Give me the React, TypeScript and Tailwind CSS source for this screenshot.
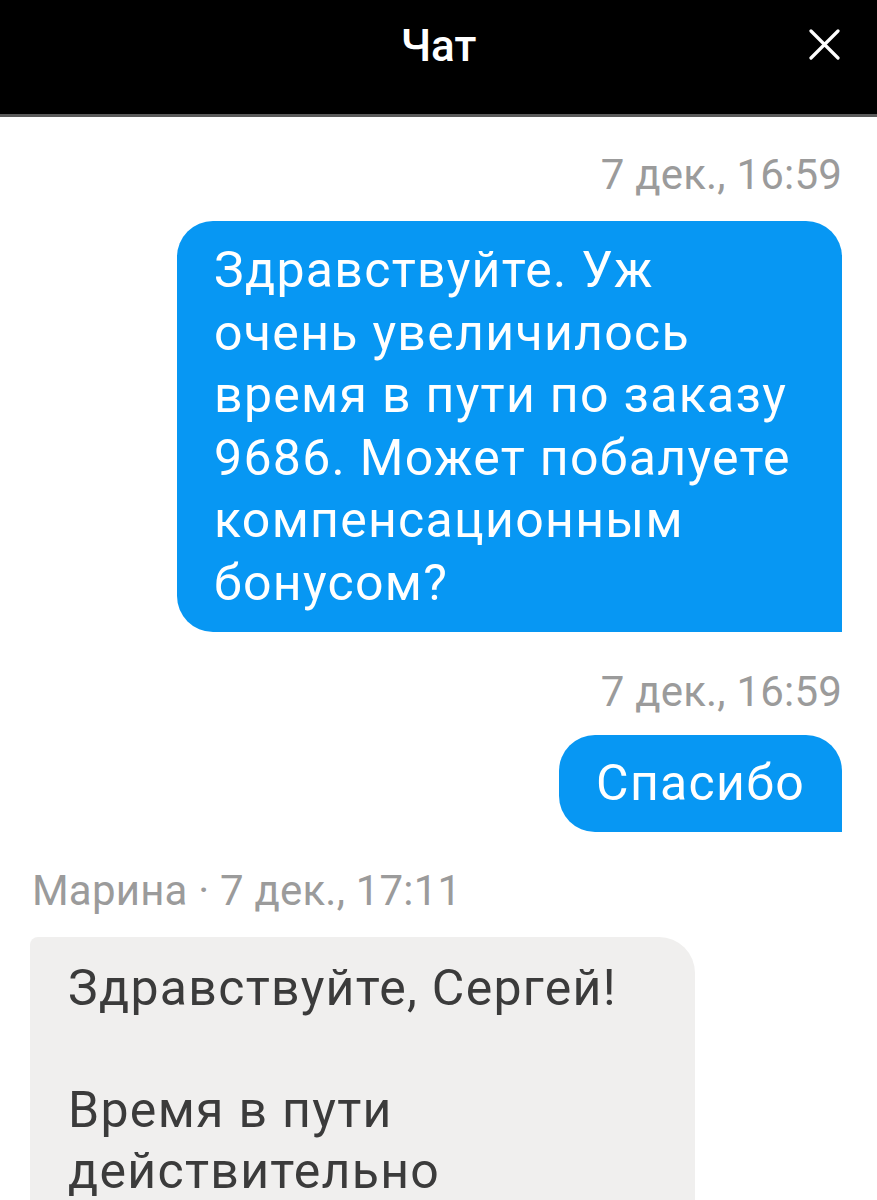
const font = { fontFamily: 'Roboto, "Noto Sans", sans-serif' };

function Stamp({ children, align = 'right' }: { children: React.ReactNode; align?: 'left' | 'right' }) {
  return (
    <div
      className={`text-[42px] leading-[50px] text-[#9b9b9b] tracking-[0.2px] ${
        align === 'right' ? 'text-right' : 'text-left'
      }`}
    >
      {children}
    </div>
  );
}

export default function App() {
  return (
    <div className="w-[877px] h-[1200px] overflow-hidden bg-white" style={font}>
      <header className="relative h-[117px] bg-black border-b-[3px] border-[#5a5a5a] flex items-start justify-center">
        <h1 className="mt-[18px] text-[44px] leading-[56px] font-medium text-white">Чат</h1>
        <button className="absolute right-[37px] top-[29px] text-white" aria-label="Закрыть">
          <svg width="31" height="31" viewBox="0 0 31 31" fill="none" stroke="currentColor" strokeWidth="3.2" strokeLinecap="round">
            <path d="M2 2 L29 29 M29 2 L2 29" />
          </svg>
        </button>
      </header>

      <main className="flex flex-col px-[35px] pt-[33px]">
        <Stamp>7 дек., 16:59</Stamp>
        <div className="mt-[21px] self-end w-[665px] bg-[#0797f3] rounded-t-[36px] rounded-bl-[36px] px-[37px] py-[18px] text-white text-[50px] leading-[62.5px] tracking-[1.3px]">
          Здравствуйте. Уж очень увеличилось время в пути по заказу 9686. Может побалуете компенсационным бонусом?
        </div>

        <div className="mt-[35px]">
          <Stamp>7 дек., 16:59</Stamp>
        </div>
        <div className="mt-[18px] self-end bg-[#0797f3] rounded-t-[36px] rounded-bl-[36px] px-[37px] py-[17px] text-white text-[50px] leading-[62.5px] tracking-[1.3px]">
          Спасибо
        </div>

        <div className="mt-[34px] -ml-[3px]">
          <Stamp align="left">Марина · 7 дек., 17:11</Stamp>
        </div>
        <div className="mt-[21px] -ml-[5px] w-[665px] bg-[#f0efee] rounded-tr-[36px] rounded-tl-[8px] px-[38px] pt-[21px] pb-[30px] text-[#3b3b3b] text-[50px] leading-[61px] tracking-[1.3px]">
          <p>Здравствуйте, Сергей!</p>
          <p className="h-[61px]" />
          <p>Время в пути действительно увеличилось из-за высокой загруженности курьеров.</p>
        </div>
      </main>
    </div>
  );
}
